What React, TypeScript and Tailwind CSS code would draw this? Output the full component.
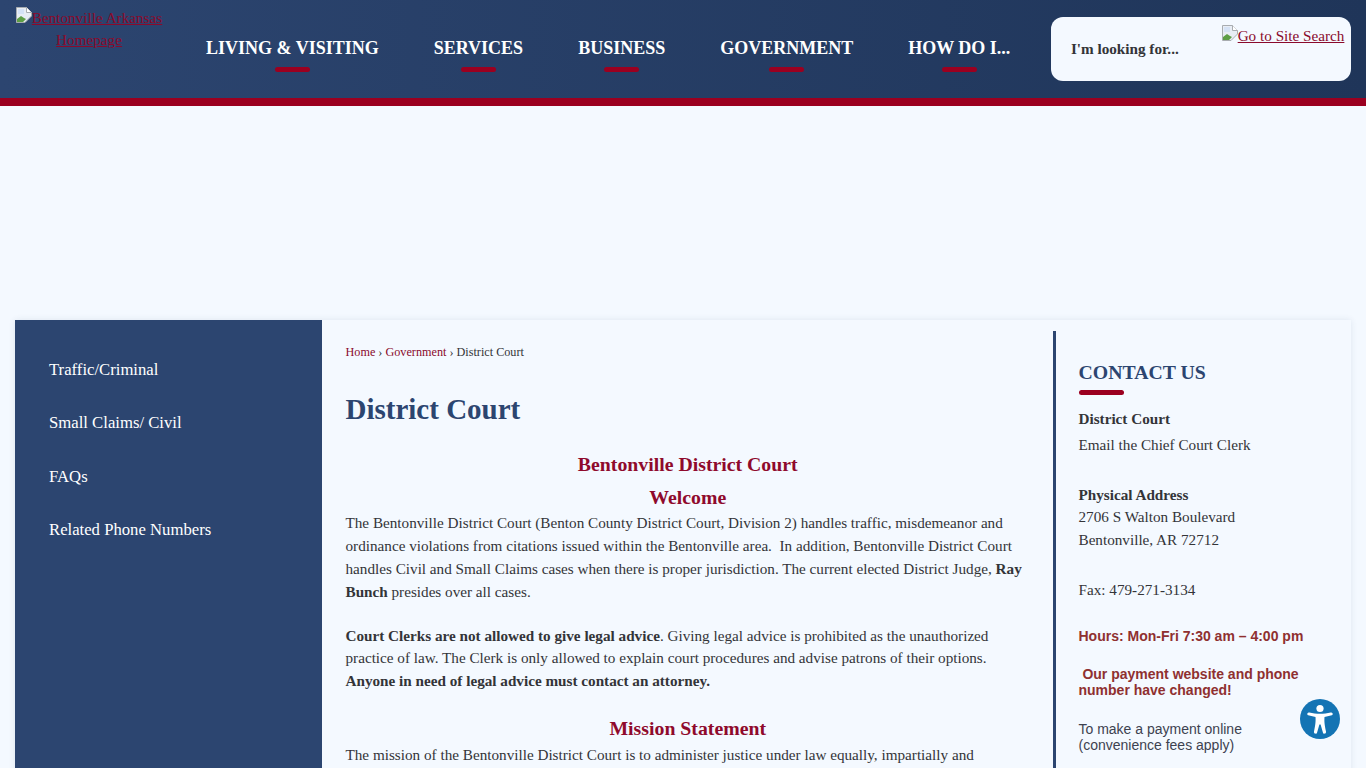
import React from 'react'

const navItems = ['LIVING & VISITING', 'SERVICES', 'BUSINESS', 'GOVERNMENT', 'HOW DO I...']
const sideItems = ['Traffic/Criminal', 'Small Claims/ Civil', 'FAQs', 'Related Phone Numbers']

// browser's broken image placeholder
const BrokenImage = () => (
  <svg width="16" height="16" viewBox="0 0 16 16" className="inline-block align-baseline">
    <path d="M0.5 0.5H10.5L15.5 5.5V9L9 15.5H0.5Z" fill="#e8edf4" stroke="#a8acb0" />
    <path d="M10.5 0.5V5.5H15.5" fill="#fff" stroke="#a8acb0" />
    <path d="M1 15V12L5 9L8 11L10 12L7 15Z" fill="#5d9e45" />
    <path d="M2 2h6v5H2z" fill="#d5e2f5" />
  </svg>
)

const App = () => {
  return (
    <div className="h-[768px] overflow-hidden bg-[#f4f9ff] font-['Liberation_Serif',serif] text-[#333438]">
      <header className="flex h-[106px] border-b-8 border-[#9b0020] bg-gradient-to-r from-[#2c4570] to-[#1f3559]">
        <div className="ml-[13px] mt-[7px] w-[152px] text-center text-[15.2px] leading-[22px] text-[#8a0a2c] underline">
          <span className="whitespace-nowrap"><BrokenImage />Bentonville Arkansas</span> Homepage
        </div>
        <nav className="ml-[13.5px] flex h-full">
          {navItems.map(item => (
            <div key={item} className="flex flex-col items-center px-[27.5px] pt-[37px]">
              <span className="whitespace-nowrap text-[18px] font-bold leading-[22px] text-white">{item}</span>
              <span className="mt-[8px] h-[5px] w-[35px] rounded-full bg-[#9b0020]" />
            </div>
          ))}
        </nav>
        <div className="ml-[13.5px] mt-[17px] flex h-[64px] w-[300px] rounded-xl bg-[#f4f9ff] pl-[19.5px] pr-[7px]">
          <span className="mt-[24px] text-[15.2px] font-bold leading-[16px]">I'm looking for...</span>
          <span className="ml-auto mt-[8px] whitespace-nowrap text-[15.2px] leading-[22px] text-[#8a0a2c] underline">
            <BrokenImage />Go to Site Search
          </span>
        </div>
      </header>

      <div className="h-[214px]" />

      <main className="mx-[15px] flex h-[600px] shadow-[0_0_6px_rgba(60,80,120,0.12)]">
        <aside className="w-[307px] shrink-0 bg-[#2c4570] pl-[34px] pt-[39px]">
          {sideItems.map(item => (
            <div key={item} className="mb-[31.4px] text-[16.7px] leading-[22px] text-white">{item}</div>
          ))}
        </aside>

        <section className="w-[731px] shrink-0 pl-[23.5px] pr-[23px] pt-[25px]">
          <div className="text-[12.2px] leading-[14px]">
            <span className="text-[#8a0a2c]">Home</span> › <span className="text-[#8a0a2c]">Government</span> › District Court
          </div>
          <h1 className="mt-[32px] text-[29px] font-bold leading-[36px] text-[#2c4570]">District Court</h1>
          <h2 className="mt-[26px] text-center text-[19.8px] font-bold leading-[23px] text-[#8f0a2c]">Bentonville District Court</h2>
          <h2 className="mt-[10px] text-center text-[19.8px] font-bold leading-[23px] text-[#8f0a2c]">Welcome</h2>
          <p className="mt-[2px] max-w-[680px] text-[15.2px] leading-[23px]">
            The Bentonville District Court (Benton County District Court, Division 2) handles traffic, misdemeanor and ordinance violations from citations issued within the Bentonville area.&nbsp; In addition, Bentonville District Court handles Civil and Small Claims cases when there is proper jurisdiction. The current elected District Judge, <b>Ray Bunch</b> presides over all cases.
          </p>
          <p className="mt-[21.5px] max-w-[680px] text-[15.2px] leading-[22.8px]">
            <b>Court Clerks are not allowed to give legal advice</b>. Giving legal advice is prohibited as the unauthorized practice of law. The Clerk is only allowed to explain court procedures and advise patrons of their options. <b>Anyone in need of legal advice must contact an attorney.</b>
          </p>
          <h2 className="mt-[24.5px] text-center text-[19.8px] font-bold leading-[23px] text-[#8f0a2c]">Mission Statement</h2>
          <p className="mt-[4px] max-w-[680px] text-[15.2px] leading-[22.8px]">
            The mission of the Bentonville District Court is to administer justice under law equally, impartially and
          </p>
        </section>

        <aside className="mt-[11px] w-[298px] border-l-[3px] border-[#2c4570] pl-[22.5px] pr-[20px] pt-[30px]">
          <h2 className="text-[19.8px] font-bold leading-[23px] text-[#2c4570]">CONTACT US</h2>
          <div className="mt-[6px] h-[5px] w-[45px] rounded-full bg-[#9b0020]" />
          <div className="mt-[14px] text-[15.2px] font-bold leading-[20px]">District Court</div>
          <div className="mt-[6px] text-[15.2px] leading-[20px]">Email the Chief Court Clerk</div>
          <div className="mt-[30px] text-[15.2px] font-bold leading-[20px]">Physical Address</div>
          <div className="text-[15.2px] leading-[23px]">2706 S Walton Boulevard<br />Bentonville, AR 72712</div>
          <div className="mt-[27px] text-[15.2px] leading-[23px]">Fax: 479-271-3134</div>
          <div className="mt-[27px] font-['Liberation_Sans',sans-serif] text-sm font-bold leading-[16px] text-[#8f3030]">Hours: Mon-Fri 7:30 am – 4:00 pm</div>
          <div className="mt-[22px] font-['Liberation_Sans',sans-serif] text-sm font-bold leading-[16px] text-[#8f3030]">&nbsp;Our payment website and phone number have changed!</div>
          <div className="mt-[23px] font-['Liberation_Sans',sans-serif] text-sm leading-[16px] text-[#3d4250]">To make a payment online<br />(convenience fees apply)</div>
        </aside>
      </main>

      {/* accessibility widget */}
      <div className="fixed left-[1300px] top-[699px] flex h-10 w-10 items-center justify-center rounded-full bg-[#1474b4]">
        <svg width="40" height="40" viewBox="0 0 40 40" fill="#fff">
          <circle cx="20" cy="9.5" r="3.6" />
          <path d="M7.5 14.2C7 15 7.4 16 8.2 16.2L15.5 18C15.8 22 15.6 25 14 32.5C13.8 33.6 14.4 34.5 15.3 34.6C16.2 34.8 16.9 34.2 17.1 33.4L19.4 25.5H20.6L22.9 33.4C23.1 34.2 23.8 34.8 24.7 34.6C25.6 34.5 26.2 33.6 26 32.5C24.4 25 24.2 22 24.5 18L31.8 16.2C32.6 16 33 15 32.5 14.2C32.1 13.5 31.4 13.3 30.7 13.5C24 15.2 16 15.2 9.3 13.5C8.6 13.3 7.9 13.5 7.5 14.2Z" />
        </svg>
      </div>
    </div>
  )
}

export default App
